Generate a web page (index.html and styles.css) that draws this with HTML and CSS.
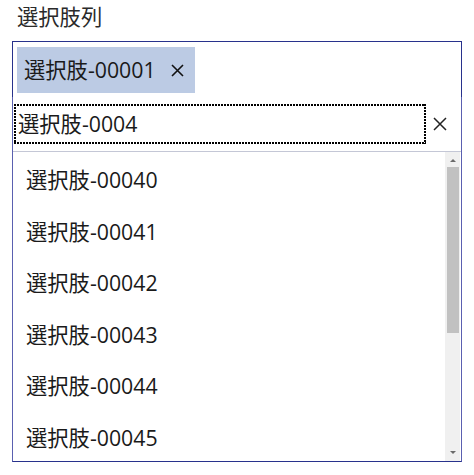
FILE: index.html
```html
<!DOCTYPE html>
<html lang="ja">
<head>
<meta charset="utf-8">
<link rel="stylesheet" href="styles.css">
</head>
<body>
<div class="field-label">選択肢列</div>
<div class="picker">
  <div class="chips">
    <span class="chip">選択肢-00001
      <svg class="chip-x" width="13" height="13" viewBox="0 0 13 13"><path d="M1 1L12 12M12 1L1 12" stroke="#111" stroke-width="1.6" fill="none"/></svg>
    </span>
  </div>
  <div class="dropdown">
    <div class="search-row">
      <div class="search">選択肢-0004</div>
      <svg class="clear-x" width="14" height="14" viewBox="0 0 14 14"><path d="M1 1L13 13M13 1L1 13" stroke="#222" stroke-width="1.5" fill="none"/></svg>
    </div>
    <div class="sep"></div>
    <div class="list-wrap">
      <ul class="list">
        <li>選択肢-00040</li>
        <li>選択肢-00041</li>
        <li>選択肢-00042</li>
        <li>選択肢-00043</li>
        <li>選択肢-00044</li>
        <li>選択肢-00045</li>
      </ul>
      <div class="scrollbar">
        <div class="arrow up"></div>
        <div class="thumb"></div>
        <div class="spacer"></div>
        <div class="arrow down"></div>
      </div>
    </div>
  </div>
</div>
</body>
</html>
```

FILE: styles.css
```css
html, body {
  margin: 0;
  padding: 0;
  background: #fff;
}
body {
  font-family: "Open Sans", "Noto Sans CJK JP", sans-serif;
  font-size: 21.3px;
  color: #1a1a1a;
}
.field-label {
  height: 34px;
  line-height: 34px;
  padding-left: 17px;
  margin-bottom: 7px;
  color: #2a2a2a;
}
.picker {
  margin-left: 12px;
  width: 450px;
  box-sizing: border-box;
}
.chips {
  border: 1px solid #28328c;
  border-bottom: none;
  padding: 5px 0 4px 4px;
  height: 56px;
  box-sizing: border-box;
}
.chip {
  display: inline-flex;
  align-items: center;
  height: 46px;
  width: 178px;
  box-sizing: border-box;
  padding-left: 7px;
  background: #bccbe4;
  line-height: 46px;
  white-space: nowrap;
}
.chip-x {
  margin-left: 15px;
  flex: none;
}
.dropdown {
  border: 1px solid #5a60b0;
  border-top: none;
  border-bottom: 1px solid #28328c;
}
.search-row {
  display: flex;
  align-items: center;
  padding-top: 7px;
  padding-left: 1px;
  height: 47px;
  box-sizing: border-box;
}
.search {
  width: 412px;
  height: 40px;
  box-sizing: border-box;
  padding: 2px 2px 2px 4px;
  line-height: 36px;
  white-space: nowrap;
  background:
    repeating-linear-gradient(to right, #000 0 2px, transparent 2px 3px) top left / 100% 2px no-repeat,
    repeating-linear-gradient(to right, #000 0 2px, transparent 2px 3px) bottom left / 100% 2px no-repeat,
    repeating-linear-gradient(to bottom, #000 0 2px, transparent 2px 3px) top left / 2px 100% no-repeat,
    repeating-linear-gradient(to bottom, #000 0 2px, transparent 2px 3px) top right / 2px 100% no-repeat;
}
.clear-x {
  margin-left: 7px;
  flex: none;
}
.sep {
  margin-top: 7px;
  height: 1px;
  background: #c4c7d6;
}
.list-wrap {
  display: flex;
  height: 309px;
}
.list {
  flex: 1;
  list-style: none;
  margin: 0;
  padding: 2px 0 0 13px;
  overflow: hidden;
}
.list li {
  height: 51.6px;
  line-height: 51.6px;
  white-space: nowrap;
}
.scrollbar {
  width: 15px;
  margin-right: 1px;
  background: #f0f0f0;
  display: flex;
  flex-direction: column;
  align-items: center;
}
.arrow {
  width: 0;
  height: 0;
  border-left: 3px solid transparent;
  border-right: 3px solid transparent;
  flex: none;
}
.arrow.up {
  margin-top: 7px;
  border-bottom: 3px solid #6a6a6a;
}
.arrow.down {
  margin-bottom: 7px;
  border-top: 3px solid #6a6a6a;
}
.thumb {
  margin-top: 5px;
  width: 12px;
  height: 166px;
  background: #c1c1c1;
  flex: none;
}
.spacer {
  flex: 1;
}
```
